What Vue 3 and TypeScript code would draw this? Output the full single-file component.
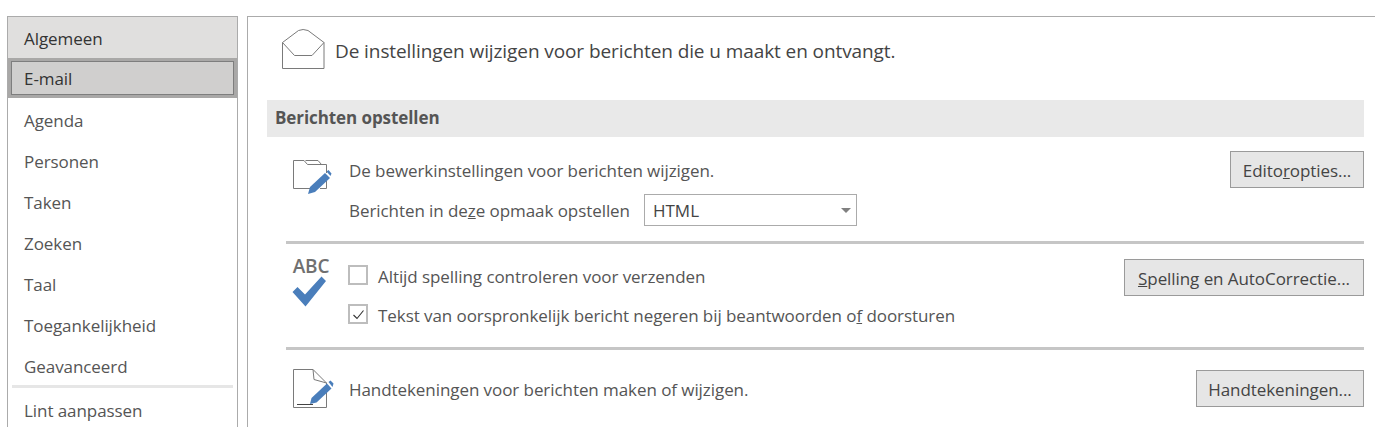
<script setup lang="ts">
const navTop: string[] = ['Algemeen', 'E-mail', 'Agenda', 'Personen', 'Taken', 'Zoeken', 'Taal', 'Toegankelijkheid', 'Geavanceerd']
</script>

<template>
  <div class="page">
    <aside class="side">
      <div
        v-for="(n, i) in navTop"
        :key="n"
        class="nav"
        :class="{ hover: i === 0, sel: i === 1 }"
      >
        <span class="nav-in">{{ n }}</span>
      </div>
      <div class="nav-sep"></div>
      <div class="nav last"><span class="nav-in">Lint aanpassen</span></div>
    </aside>
    <main class="main">
      <header class="head">
        <svg class="env" width="44" height="42" viewBox="0 0 44 42" fill="none" stroke="#7a7a7a" stroke-width="1">
          <path d="M1.5 14.5 L17.5 2.5 Q22 0.5 27 2.5 L43 14.5 V40.5 H1.5 Z" />
          <path d="M1.5 14.5 L13.5 27.5 H31 L43 14.5" />
        </svg>
        <span class="head-t">De instellingen wijzigen voor berichten die u maakt en ontvangt.</span>
      </header>
      <h2 class="sec">Berichten opstellen</h2>

      <section class="group g1">
        <svg class="ic" width="40" height="37" viewBox="0 0 40 37" fill="none" stroke="#7a7a7a">
          <path d="M19 29.5 H1.5 V1.5 H12 L15.5 5.5 H34.5 V14" />
          <path d="M13.5 1.5 H26 L29.5 5.5" />
          <path d="M28 29.5 H34.5 V22" />
          <path d="M16 35 L18 28 L33 14 L38 19 L23 33 Z" fill="#4a7ebb" stroke="none" />
          <path d="M34.5 12.5 L36.5 11 L39.5 14.5 L38.5 17 Z" fill="#4a7ebb" stroke="none" />
        </svg>
        <div class="col">
          <div class="t tl1">De bewerkinstellingen voor berichten wijzigen.</div>
          <div class="opm">
            <span class="t">Berichten in de<u>z</u>e opmaak opstellen</span>
            <div class="sel-box"><span>HTML</span><i class="caret"></i></div>
          </div>
        </div>
        <button class="btn b1">Edito<u>r</u>opties...</button>
      </section>
      <div class="div"></div>

      <section class="group g2">
        <div class="abc">
          <span class="abc-t">ABC</span>
          <svg class="abc-check" width="35" height="31" viewBox="0 0 35 31"><path d="M0.5 16 L5.5 11 L13 18.5 L29.5 0.5 L34 5 L13.5 30.5 Z" fill="#4a7ebb" /></svg>
        </div>
        <div class="col checks">
          <label class="chk-row"><span class="chk"></span><span class="t">Altijd spelling controleren voor verzenden</span></label>
          <label class="chk-row"><span class="chk">
            <svg width="15" height="15" viewBox="0 0 15 15" fill="none"><path d="M2.5 8 L6 11.5 L12.5 3.5" stroke="#333" stroke-width="1.1" /></svg>
          </span><span class="t">Tekst van oorspronkelijk bericht negeren bij beantwoorden o<u>f</u> doorsturen</span></label>
        </div>
        <button class="btn b2"><u>S</u>pelling en AutoCorrectie...</button>
      </section>
      <div class="div"></div>

      <section class="group g3">
        <svg class="ic" width="42" height="42" viewBox="0 0 42 42" fill="none" stroke="#7a7a7a">
          <path d="M1.5 1.5 H21 L34.5 15 V39.5 H1.5 Z" />
          <path d="M21 1.5 L22 11.5 L34.5 15" />
          <path d="M5 36.5 H21" stroke="#444" />
          <path d="M18 36 L19.5 30 L35 15.5 L39.5 20.5 L24.5 34.5 Z" fill="#4a7ebb" stroke="none" />
          <path d="M36.5 14 L38.5 12.5 L41.5 15.5 L40.5 19 Z" fill="#4a7ebb" stroke="none" />
        </svg>
        <div class="col"><div class="t">Handtekeningen voor berichten maken of wijzigen.</div></div>
        <button class="btn b3">Handtekeningen...</button>
      </section>
    </main>
  </div>
</template>

<style>
html, body { margin: 0; background: #fff; overflow: hidden; }
</style>

<style scoped>
.page {
  display: flex;
  height: 427px;
  overflow: hidden;
  box-sizing: border-box;
  padding: 16px 0 0 7px;
  gap: 9px;
  font-family: "Open Sans", "Noto Sans", sans-serif;
  color: #505050;
  background: #fff;
}
.side {
  width: 231px;
  flex: none;
  box-sizing: border-box;
  border: 1px solid #ababab;
  border-bottom: 0;
}
.nav {
  height: 41px;
  display: flex;
  align-items: center;
  padding: 4px 0 0 16px;
  font-size: 17px;
  letter-spacing: -0.07px;
  box-sizing: border-box;
  color: #555;
}
.hover { background: #e0dfde; color: #333; padding-top: 1px; }
.sel {
  background: #a9a8a7;
  color: #333;
  padding: 3px;
  height: 40px;
}
.sel .nav-in {
  flex: 1;
  align-self: stretch;
  display: flex;
  align-items: center;
  padding: 1px 0 0 12px;
  background: #d0cfce;
  border: 1px solid #7e7e7e;
}
.nav-sep { height: 3px; background: #e6e6e6; margin: 0 4px; }
.last { height: 44px; padding-top: 0; }
.main {
  flex: 1;
  box-sizing: border-box;
  border: 1px solid #ababab;
  border-width: 1px 0 0 1px;
  padding: 0 11px 0 19px;
  min-width: 0;
}
.head {
  display: flex;
  align-items: flex-start;
  height: 83px;
  padding: 11px 0 0 14px;
  box-sizing: border-box;
  gap: 10px;
}
.env { flex: none; }
.head-t { font-size: 19px; letter-spacing: -0.09px; color: #444; white-space: nowrap; line-height: 26px; margin-top: 10px; }
.sec {
  margin: 0;
  height: 37px;
  background: #e9e9e9;
  padding: 0 0 3px 8px;
  box-sizing: border-box;
  display: flex;
  align-items: center;
  font-size: 17px;
  font-weight: 700;
  letter-spacing: -0.08px;
  color: #555;
}
.group {
  display: flex;
  margin-left: 19px;
  position: relative;
  align-items: flex-start;
}
.g1 { height: 104px; }
.g2 { height: 103px; }
.g3 { height: 76px; }
.col { flex: 1; min-width: 0; }
.t { font-size: 17px; letter-spacing: -0.07px; color: #555; white-space: nowrap; }
.ic { flex: none; margin-left: 6px; }
.g1 .ic { margin-top: 22px; margin-right: 17px; }
.tl1 { margin-top: 23px; line-height: 22px; }
.opm {
  display: flex;
  align-items: center;
  margin-top: 12px;
  gap: 14px;
}
.sel-box {
  width: 213px;
  height: 32px;
  box-sizing: border-box;
  border: 1px solid #ababab;
  display: flex;
  align-items: center;
  justify-content: space-between;
  padding: 0 5px 0 8px;
  font-size: 17px;
  color: #444;
}
.caret {
  width: 0;
  height: 0;
  border-left: 5.5px solid transparent;
  border-right: 5.5px solid transparent;
  border-top: 5.5px solid #808080;
}
.btn {
  flex: none;
  height: 37px;
  box-sizing: border-box;
  background: #e6e6e6;
  border: 1px solid #9a9a9a;
  font-family: inherit;
  font-size: 17px;
  letter-spacing: -0.07px;
  color: #444;
  padding: 2px 0 0;
  text-align: center;
}
.b1 { width: 134px; margin-top: 14px; }
.b2 { width: 240px; margin-top: 15px; }
.b3 { width: 168px; margin-top: 20px; }
.abc {
  flex: none;
  width: 38px;
  margin-left: 6px;
  margin-right: 18px;
  display: flex;
  flex-direction: column;
  align-items: center;
  margin-top: 12px;
}
.abc-t { font-size: 19px; font-weight: 600; color: #707070; line-height: 20px; letter-spacing: -0.2px; }
.abc-check { margin-left: -3px; }
.checks { padding-top: 21px; display: flex; flex-direction: column; gap: 19px; }
.chk-row { display: flex; align-items: center; gap: 10px; height: 20px; }
.chk-row .t { margin-top: 2px; }
.chk {
  width: 20px;
  height: 20px;
  flex: none;
  box-sizing: border-box;
  border: 2px solid #bdbdbd;
  display: flex;
  align-items: center;
  justify-content: center;
  background: #fff;
}
.div { height: 3px; background: #c6c6c6; margin-left: 19px; }
.g3 .ic { margin-top: 18px; margin-right: 15px; }
.g3 .col { padding-top: 29px; line-height: 22px; }
</style>
